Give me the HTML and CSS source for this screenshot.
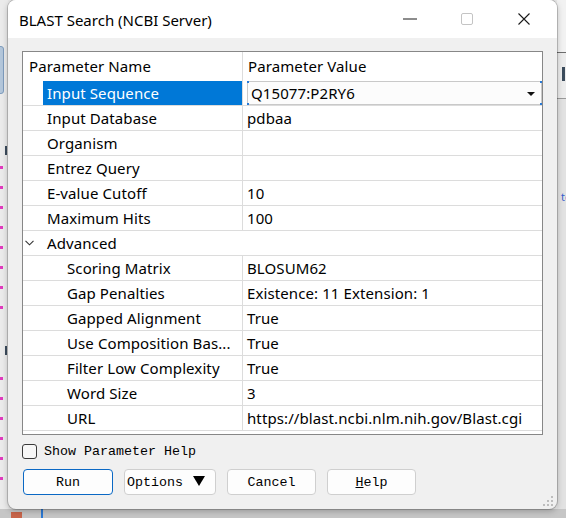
FILE: index.html
```html
<!DOCTYPE html>
<html>
<head>
<meta charset="utf-8">
<link rel="stylesheet" href="styles.css">
</head>
<body>
<div class="desktop">
  <div class="bg-left">
    <div class="tab-blue"></div>
    <span class="glyph g1"></span>
    <span class="glyph g2"></span>
    <div class="arrows a1"><i></i><i></i><i></i><i></i><i></i><i></i><i></i><i></i></div>
    <div class="arrows a2"><i></i><i></i><i></i><i></i><i></i><i></i></div>
  </div>
  <div class="bg-right">
    <div class="r-top"></div>
    <div class="r-mid"><span class="r-glyph"></span></div>
    <span class="r-text">te</span>
  </div>
  <div class="bg-bottom">
    <span class="red-x"></span>
    <span class="blue-line"></span>
  </div>

  <div class="window">
    <div class="titlebar">
      <span class="title">BLAST Search (NCBI Server)</span>
      <div class="controls">
        <span class="ctl"><svg width="14" height="2" viewBox="0 0 14 2"><path d="M0 1H14" stroke="#1a1a1a" stroke-width="1"/></svg></span>
        <span class="ctl"><svg width="12" height="12" viewBox="0 0 12 12"><rect x="0.5" y="0.5" width="11" height="11" rx="1.5" fill="none" stroke="#c4c4c4"/></svg></span>
        <span class="ctl"><svg width="12" height="12" viewBox="0 0 12 12"><path d="M0.5 0.5L11.5 11.5M11.5 0.5L0.5 11.5" stroke="#1a1a1a" stroke-width="1.1"/></svg></span>
      </div>
    </div>
    <div class="client">
      <div class="grid">
        <div class="hdr">
          <div class="hk">Parameter Name</div>
          <div class="hv">Parameter Value</div>
        </div>
        <div class="row">
          <div class="k l1"><span class="lbl sel">Input Sequence</span></div>
          <div class="v"><div class="combo">Q15077:P2RY6<svg class="drop" width="8" height="4" viewBox="0 0 8 4"><path d="M0 0H8L4 4Z" fill="#111"/></svg><i class="c tl"></i><i class="c tr"></i><i class="c bl"></i><i class="c br"></i></div></div>
        </div>
        <div class="row"><div class="k l1"><span class="lbl">Input Database</span></div><div class="v">pdbaa</div></div>
        <div class="row"><div class="k l1"><span class="lbl">Organism</span></div><div class="v"></div></div>
        <div class="row"><div class="k l1"><span class="lbl">Entrez Query</span></div><div class="v"></div></div>
        <div class="row"><div class="k l1"><span class="lbl">E-value Cutoff</span></div><div class="v">10</div></div>
        <div class="row"><div class="k l1"><span class="lbl">Maximum Hits</span></div><div class="v">100</div></div>
        <div class="row group">
          <svg class="chev" width="9" height="6" viewBox="0 0 9 6"><path d="M0.5 0.8L4.5 4.8L8.5 0.8" fill="none" stroke="#333" stroke-width="1.1"/></svg>
          <span class="lbl">Advanced</span>
        </div>
        <div class="row"><div class="k l2"><span class="lbl">Scoring Matrix</span></div><div class="v">BLOSUM62</div></div>
        <div class="row"><div class="k l2"><span class="lbl">Gap Penalties</span></div><div class="v">Existence: 11 Extension: 1</div></div>
        <div class="row"><div class="k l2"><span class="lbl">Gapped Alignment</span></div><div class="v">True</div></div>
        <div class="row"><div class="k l2"><span class="lbl">Use Composition Bas...</span></div><div class="v">True</div></div>
        <div class="row"><div class="k l2"><span class="lbl">Filter Low Complexity</span></div><div class="v">True</div></div>
        <div class="row"><div class="k l2"><span class="lbl">Word Size</span></div><div class="v">3</div></div>
        <div class="row"><div class="k l2"><span class="lbl">URL</span></div><div class="v">https://blast.ncbi.nlm.nih.gov/Blast.cgi</div></div>
      </div>
      <label class="check"><span class="box"></span><span class="check-text">Show Parameter Help</span></label>
      <div class="buttons">
        <button class="btn run">Run</button>
        <button class="btn opts"><span>Options</span><svg class="tri" width="12" height="10" viewBox="0 0 12 10"><path d="M0 0H12L6 10Z" fill="#000"/></svg></button>
        <button class="btn cancel">Cancel</button>
        <button class="btn help"><u>H</u>elp</button>
      </div>
    </div>
    <svg class="grip" width="10" height="10" viewBox="0 0 10 10">
      <rect x="8" y="0" width="2" height="2" fill="#bdbdbd"/>
      <rect x="4" y="4" width="2" height="2" fill="#bdbdbd"/>
      <rect x="8" y="4" width="2" height="2" fill="#bdbdbd"/>
      <rect x="0" y="8" width="2" height="2" fill="#bdbdbd"/>
      <rect x="4" y="8" width="2" height="2" fill="#bdbdbd"/>
      <rect x="8" y="8" width="2" height="2" fill="#bdbdbd"/>
    </svg>
  </div>
</div>
</body>
</html>
```

FILE: styles.css
```css
* { box-sizing: border-box; margin: 0; padding: 0; }
html, body { width: 566px; height: 518px; overflow: hidden; }
body { background: #e7e7e7; font-family: "Noto Sans", "Open Sans", sans-serif; color: #000; }

.desktop { position: relative; width: 566px; height: 518px; }

/* background behind the window */
.bg-left { position: absolute; left: 0; top: 0; width: 8px; height: 509px; background: #ebebeb; }
.tab-blue { position: absolute; left: -4px; top: 46px; width: 8px; height: 48px; border-radius: 3px; background: #b3c6da; border: 1px solid #7e9cbd; }
.glyph { position: absolute; left: 5px; width: 2px; height: 9px; background: #3b4b5c; }
.glyph.g1 { top: 146px; }
.glyph.g2 { top: 346px; }
.arrows { position: absolute; left: 0; display: flex; flex-direction: column; gap: 17px; }
.arrows.a1 { top: 166px; }
.arrows.a2 { top: 377px; }
.arrows i { display: block; width: 3px; height: 3px; background: #e03cbe; }

.bg-right { position: absolute; left: 557px; top: 0; width: 9px; height: 509px; background: #e2e2e2; overflow: hidden; }
.r-top { height: 53px; background: #f2f2f2; border-bottom: 1px solid #6d6d6d; }
.r-mid { height: 46px; border-bottom: 1px solid #9a9a9a; background: #ececec; position: relative; }
.r-glyph { position: absolute; left: 5px; top: 14px; width: 3px; height: 14px; background: #3c4c5c; }
.r-text { position: absolute; left: 4px; top: 190px; font-size: 11px; color: #3a5fcd; line-height: 14px; }

.bg-bottom { position: absolute; left: 0; top: 509px; width: 566px; height: 9px; background: #c6c6c6; }
.red-x { position: absolute; left: 11px; top: 3px; width: 11px; height: 9px; background: #c8654b; }
.blue-line { position: absolute; left: 41px; top: 0; width: 2px; height: 9px; background: #2c79d4; }

/* window */
.window {
  position: absolute; left: 8px; top: 0; width: 549px; height: 509px;
  background: #f0f0f0; border-radius: 8px; overflow: hidden;
  box-shadow: 0 0 0 1px rgba(0,0,0,0.18), 0 2px 6px rgba(0,0,0,0.25);
}
.titlebar { height: 38px; background: #fff; display: flex; align-items: center; padding-left: 11px; }
.title { font-size: 15px; flex: 1; padding-top: 2px; }
.controls { display: flex; margin-right: 5px; height: 38px; }
.ctl { width: 57px; display: flex; align-items: center; justify-content: center; }
.ctl svg { display: block; }

.client { padding: 13px 14px 0; }

.grid { border: 1px solid #878787; background: #fff; height: 384px; overflow: hidden; font-size: 15px; letter-spacing: 0.1px; }
.hdr { height: 29px; display: flex; }
.hk { width: 220px; border-right: 1px solid #dcdcdc; padding-left: 6px; line-height: 29px; }
.hv { flex: 1; padding-left: 5px; line-height: 29px; }

.row { height: 25px; display: flex; border-bottom: 1px solid #dcdcdc; }
.k { width: 220px; border-right: 1px solid #dcdcdc; display: flex; }
.k.l1 { padding-left: 20px; }
.k.l2 { padding-left: 40px; }
.lbl { flex: 1; padding-left: 4px; line-height: 24px; white-space: nowrap; }
.lbl.sel { background: #0078d7; color: #fff; }
.v { flex: 1; padding-left: 4px; line-height: 24px; white-space: nowrap; }

.row.group { align-items: center; padding-left: 2px; }
.chev { display: block; margin-right: 9px; }
.group .lbl { flex: none; }

.row:first-of-type .v { padding-left: 0; }
.combo {
  position: relative; height: 24px; border: 1px solid #c9c9c9; background: #fcfcfc;
  padding-left: 3px; line-height: 22px; display: flex; align-items: center;
}
.drop { position: absolute; right: 6px; top: 10px; }
.combo .c { position: absolute; width: 2px; height: 2px; background: #2a7ad6; }
.c.tl { left: -1px; top: -1px; }
.c.tr { right: -1px; top: -1px; }
.c.bl { left: -1px; bottom: -1px; }
.c.br { right: -1px; bottom: -1px; }

.check { display: flex; align-items: center; height: 16px; margin-top: 8px; font-family: "Liberation Mono", monospace; font-size: 13.33px; }
.box { width: 15px; height: 15px; border: 1px solid #3a3a3a; border-radius: 3px; background: #f7f7f7; margin-right: 7px; }

.buttons { display: flex; gap: 11px; margin-top: 10px; padding-left: 1px; }
.btn {
  height: 26px; border: 1px solid #cfcfcf; border-radius: 4px; background: #fdfdfd;
  font-family: "Liberation Mono", monospace; font-size: 13.33px; color: #000;
  display: flex; align-items: center; justify-content: center;
}
.btn.run { width: 90px; border-color: #0a68c4; }
.btn.opts { width: 92px; justify-content: flex-start; padding-left: 2px; }
.btn.cancel { width: 89px; }
.btn.help { width: 89px; }
.tri { display: block; margin-left: 10px; margin-top: -2px; }

.grip { position: absolute; right: 4px; bottom: 3px; }
```
